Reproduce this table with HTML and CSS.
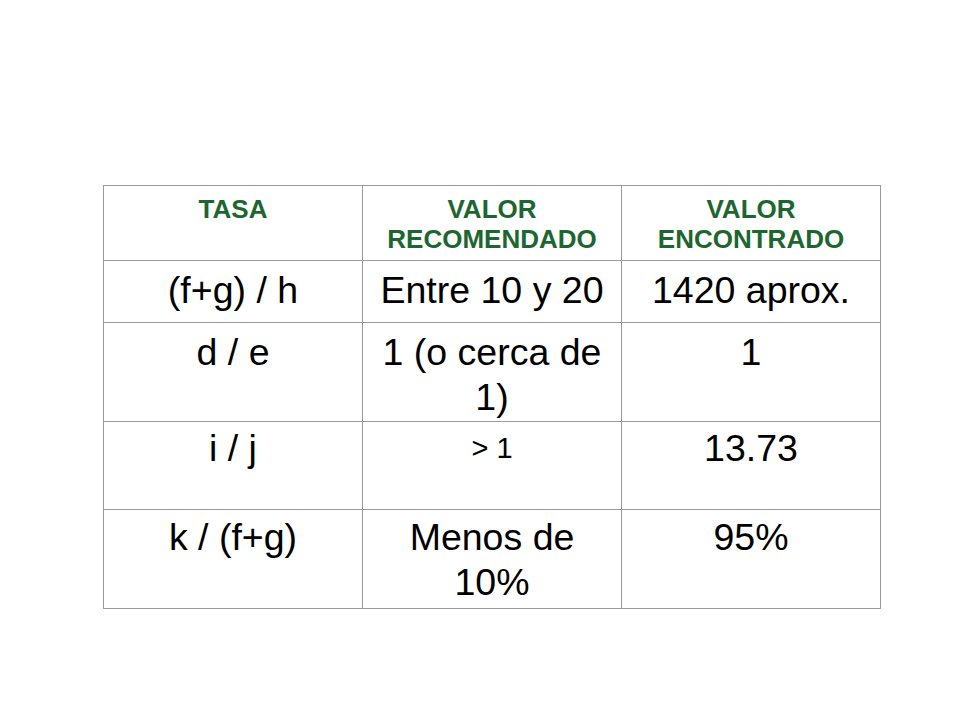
FILE: index.html
```html
<!DOCTYPE html>
<html lang="es">
<head>
<meta charset="utf-8">
<title>Tasas</title>
<link rel="stylesheet" href="styles.css">
</head>
<body>
<div class="slide">
  <table class="tbl">
    <colgroup>
      <col class="c"><col class="c"><col class="c">
    </colgroup>
    <tr class="r-head">
      <th>TASA</th>
      <th>VALOR<br>RECOMENDADO</th>
      <th>VALOR<br>ENCONTRADO</th>
    </tr>
    <tr class="r1">
      <td>(f+g) / h</td>
      <td>Entre 10 y 20</td>
      <td>1420 aprox.</td>
    </tr>
    <tr class="r2">
      <td>d / e</td>
      <td>1 (o cerca de<br>1)</td>
      <td>1</td>
    </tr>
    <tr class="r3">
      <td>i / j</td>
      <td class="small">&gt; 1</td>
      <td>13.73</td>
    </tr>
    <tr class="r4">
      <td>k / (f+g)</td>
      <td>Menos de<br>10%</td>
      <td>95%</td>
    </tr>
  </table>
</div>
</body>
</html>
```

FILE: styles.css
```css
html, body {
  margin: 0;
  padding: 0;
  background: #ffffff;
}
.slide {
  width: 960px;
  height: 720px;
  padding-top: 185px;
  padding-left: 103px;
  box-sizing: border-box;
  font-family: "Liberation Sans", Arial, sans-serif;
  color: #000000;
}
.tbl {
  border-collapse: collapse;
  table-layout: fixed;
  width: 778px;
}
.tbl .c {
  width: 259px;
}
.tbl th,
.tbl td {
  border: 1px solid #9a9a9a;
  text-align: center;
  vertical-align: top;
  padding: 7px 4px 0;
}
.tbl th {
  color: #1e6630;
  font-weight: bold;
  font-size: 26px;
  line-height: 30px;
  padding-top: 8px;
}
.tbl td {
  font-size: 37.5px;
  line-height: 45px;
}
.tbl td.small {
  font-size: 29px;
  line-height: 36px;
  padding-top: 8px;
}
.r-head { height: 75px; }
.r1 { height: 62px; }
.r2 { height: 99px; }
.r3 { height: 88px; }
.r4 { height: 99px; }
.r3 td { padding-top: 4px; }
.r4 td { padding-top: 5px; }
```
